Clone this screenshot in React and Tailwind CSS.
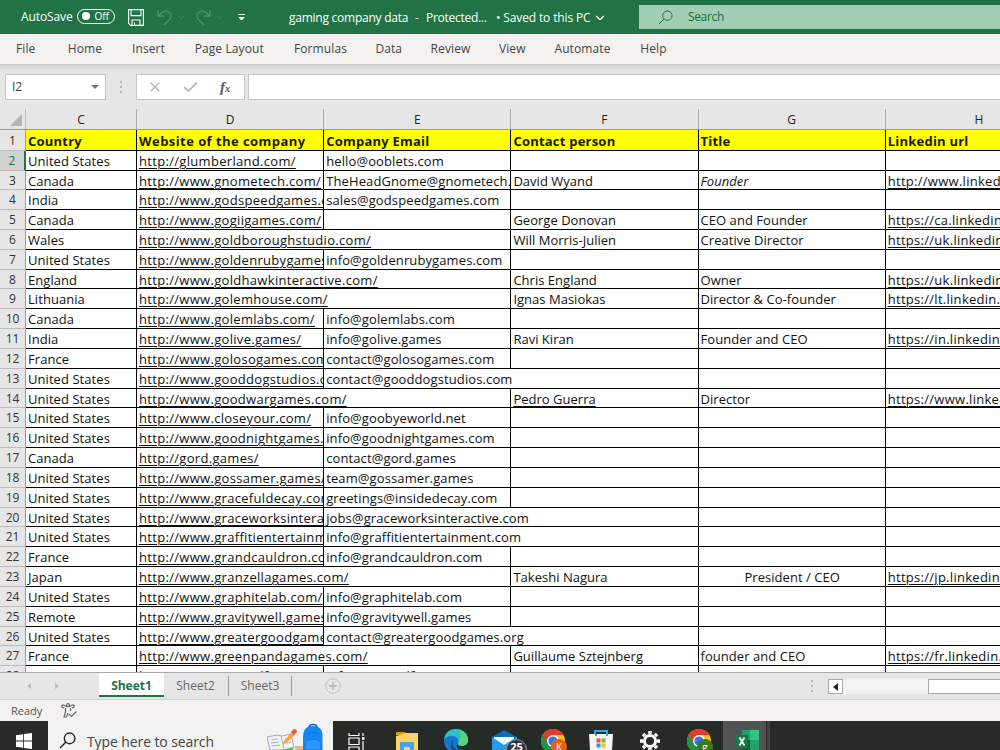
import { ChevronDown, X, Check } from 'lucide-react';

const menus = [
  ['File', 'w-[51.5px]'],
  ['Home', 'w-[67px]'],
  ['Insert', 'w-[60px]'],
  ['Page Layout', 'w-[101.5px]'],
  ['Formulas', 'w-[81px]'],
  ['Data', 'w-[55.5px]'],
  ['Review', 'w-[68px]'],
  ['View', 'w-[55.5px]'],
  ['Automate', 'w-[85px]'],
  ['Help', 'w-[57px]'],
];

const columns = ['C', 'D', 'E', 'F', 'G', 'H'];

const header = ['Country', 'Website of the company', 'Company Email', 'Contact person', 'Title', 'Linkedin url'];

// country, website, email, contact, title, linkedin
const rows = [
  ['United States', 'http://glumberland.com/', 'hello@ooblets.com', '', '', ''],
  ['Canada', 'http://www.gnometech.com/', 'TheHeadGnome@gnometech.com', 'David Wyand', 'Founder', 'http://www.linkedin.com/in/'],
  ['India', 'http://www.godspeedgames.com/', 'sales@godspeedgames.com', '', '', ''],
  ['Canada', 'http://www.gogiigames.com/', '', 'George Donovan', 'CEO and Founder', 'https://ca.linkedin.com/in/'],
  ['Wales', 'http://www.goldboroughstudio.com/', '', 'Will Morris-Julien', 'Creative Director', 'https://uk.linkedin.com/in/'],
  ['United States', 'http://www.goldenrubygames.com/', 'info@goldenrubygames.com', '', '', ''],
  ['England', 'http://www.goldhawkinteractive.com/', '', 'Chris England', 'Owner', 'https://uk.linkedin.com/in/'],
  ['Lithuania', 'http://www.golemhouse.com/', '', 'Ignas Masiokas', 'Director & Co-founder', 'https://lt.linkedin.com/in/'],
  ['Canada', 'http://www.golemlabs.com/', 'info@golemlabs.com', '', '', ''],
  ['India', 'http://www.golive.games/', 'info@golive.games', 'Ravi Kiran', 'Founder and CEO', 'https://in.linkedin.com/in/'],
  ['France', 'http://www.golosogames.com/', 'contact@golosogames.com', '', '', ''],
  ['United States', 'http://www.gooddogstudios.com/', 'contact@gooddogstudios.com', '', '', ''],
  ['United States', 'http://www.goodwargames.com/', '', 'Pedro Guerra', 'Director', 'https://www.linkedin.com/in/'],
  ['United States', 'http://www.closeyour.com/', 'info@goobyeworld.net', '', '', ''],
  ['United States', 'http://www.goodnightgames.com/', 'info@goodnightgames.com', '', '', ''],
  ['Canada', 'http://gord.games/', 'contact@gord.games', '', '', ''],
  ['United States', 'http://www.gossamer.games/', 'team@gossamer.games', '', '', ''],
  ['United States', 'http://www.gracefuldecay.com/', 'greetings@insidedecay.com', '', '', ''],
  ['United States', 'http://www.graceworksinteractive.com/', 'jobs@graceworksinteractive.com', '', '', ''],
  ['United States', 'http://www.graffitientertainment.com/', 'info@graffitientertainment.com', '', '', ''],
  ['France', 'http://www.grandcauldron.com/', 'info@grandcauldron.com', '', '', ''],
  ['Japan', 'http://www.granzellagames.com/', '', 'Takeshi Nagura', 'President / CEO', 'https://jp.linkedin.com/in/'],
  ['United States', 'http://www.graphitelab.com/', 'info@graphitelab.com', '', '', ''],
  ['Remote', 'http://www.gravitywell.games/', 'info@gravitywell.games', '', '', ''],
  ['United States', 'http://www.greatergoodgames.com/', 'contact@greatergoodgames.org', '', '', ''],
  ['France', 'http://www.greenpandagames.com/', '', 'Guillaume Sztejnberg', 'founder and CEO', 'https://fr.linkedin.com/in/'],
  ['Saint Kitts', 'http://www.greywolf.com/', 'info@greywolfgames.com', '', '', ''],
];

// rows whose website / email text runs into the empty cell on its right
const wideWebsite = [6, 8, 9, 14, 23, 27];
const wideEmail = [13, 20, 21, 26];

const tracking = [
  'tracking-[0.06px]',
  'tracking-[0.31px]',
  'tracking-[0.11px]',
  'tracking-[0.02px]',
  'tracking-[0.04px]',
  'tracking-[0.28px]',
];

const Cell = ({ text, col, row }) => {
  const spills = (col === 1 && wideWebsite.includes(row)) || (col === 2 && wideEmail.includes(row));
  const linked = col === 1 || col === 5 || text === 'Pedro Guerra';
  return (
    <div
      className={`${col === 0 ? 'w-[111px]' : 'w-[187.2px]'} shrink-0 border-b border-black pl-[2px] whitespace-nowrap ${tracking[col]} ${
        spills ? 'relative z-10 overflow-visible' : 'overflow-hidden border-r'
      } ${text === 'Founder' ? 'italic' : ''} ${text === 'President / CEO' ? 'pr-px text-center' : ''}`}
    >
      <span className={linked ? 'underline decoration-1 underline-offset-2' : ''}>{text}</span>
    </div>
  );
};

const SearchIcon = ({ className }) => (
  <svg className={className} viewBox="0 0 16 16" fill="none" stroke="currentColor">
    <circle cx="10" cy="6" r="5" />
    <path d="M6.500 9.500L1 15" />
  </svg>
);

const TitleBar = () => (
  <div className="flex h-[34px] shrink-0 items-center bg-[#217346] text-[12px] text-white">
    <span className="ml-[21px] w-[56px] tracking-[-0.1px]">AutoSave</span>
    <div className="flex h-[15px] w-[38px] -translate-y-px items-center justify-between rounded-full border border-white pr-[5px] pl-[4px] text-[10px]">
      <span className="h-[8px] w-[8px] rounded-full bg-white" />
      <span>Off</span>
    </div>
    <svg className="ml-[13px] h-[17px] w-[16px]" viewBox="0 0 16 17" fill="none" stroke="white" strokeWidth="1.1">
      <path d="M.6.6h14.800v15.800H2.600l-2-2zM3 .6v6h10v-6M4 16.400V11h8v5.400M6.500 16v-2.500" />
    </svg>
    <svg className="ml-[13px] h-[17px] w-[16px] text-[#4c946c]" viewBox="0 0 16 17" fill="none" stroke="currentColor" strokeWidth="1.3">
      <path d="M1 1v6h6M1 7l4-3.500c7-4 12 3 7 7.500l-5 5" />
    </svg>
    <ChevronDown className="ml-[4px] h-[9px] w-[9px] text-[#4c946c]" />
    <svg className="ml-[9px] h-[17px] w-[16px] text-[#4c946c]" viewBox="0 0 16 17" fill="none" stroke="currentColor" strokeWidth="1.3">
      <path d="M15 1v6H9M15 7l-4-3.500C4-.5-1 6.500 4 11l5 5" />
    </svg>
    <ChevronDown className="ml-[4px] h-[9px] w-[9px] text-[#4c946c]" />
    <svg className="ml-[13px] h-[9px] w-[9px]" viewBox="0 0 9 9">
      <path d="M1 1.500h7M2 4.500l2.500 2.500L7 4.500z" fill="white" stroke="white" strokeWidth="1" />
    </svg>
    <div className="ml-[43px] flex w-[350px] items-center pt-[2px] whitespace-pre">
      <span className="w-[207px] tracking-[-0.27px]">
        <span className="tracking-[-0.25px]">gaming company data</span>
        <span className="tracking-[0.3px]">{'  -  '}</span>Protected...
      </span>
      <span className="w-[97px] tracking-[-0.14px]">• Saved to this PC</span>
      <ChevronDown className="h-[14px] w-[14px]" />
    </div>
    <div className="flex h-[24px] flex-1 items-center bg-[#a0cfb5] text-[#1e6b40]">
      <SearchIcon className="ml-[19px] h-[15px] w-[15px]" />
      <span className="ml-[15px] tracking-[-0.35px]">Search</span>
    </div>
  </div>
);

const FormulaBar = () => (
  <div className="flex h-[45px] shrink-0 items-center border-t border-[#cccccc] bg-[#e6e6e6] bg-linear-to-b from-[#d5d5d5] to-[#e6e6e6] to-15% pl-[5px]">
    <div className="flex h-[26px] w-[101px] shrink-0 items-center justify-between border border-[#c6c6c6] bg-white pr-[6px] pl-[6px] text-[12px] text-[#444]">
      I2
      <span className="border-x-[4px] border-t-[4px] border-x-transparent border-t-[#777]" />
    </div>
    <Dots className="ml-[14px]" />
    <div className="ml-[14px] flex h-[26px] w-[109px] shrink-0 items-center border border-[#c6c6c6] bg-white">
      <X className="ml-[10px] h-[16px] w-[16px] text-[#b8b8b8]" />
      <Check className="ml-[19px] h-[17px] w-[17px] text-[#b8b8b8]" strokeWidth={2.5} />
      <span className="ml-[21px] font-['Liberation_Serif',serif] text-[15px] font-bold text-[#555] italic">
        f<span className="text-[10px]">x</span>
      </span>
    </div>
    <div className="ml-[3px] h-[26px] flex-1 border border-r-0 border-[#c6c6c6] bg-white" />
  </div>
);

const Dots = ({ className }) => (
  <div className={`flex w-[2px] shrink-0 flex-col gap-[3px] ${className}`}>
    <span className="h-[2px] bg-[#b4b4b4]" />
    <span className="h-[2px] bg-[#b4b4b4]" />
    <span className="h-[2px] bg-[#b4b4b4]" />
  </div>
);

const Sheet = () => (
  <div className="h-[563px] shrink-0 overflow-hidden bg-white">
    <div className="flex h-[21px] w-[1200px] border-b border-[#999] bg-[#e6e6e6] text-[12px] text-[#222]">
      <div className="flex w-[26px] items-end justify-end border-r border-[#bbb] pr-[3px] pb-[3px]">
        <span className="border-b-[12px] border-l-[12px] border-b-[#b4b4b4] border-l-transparent" />
      </div>
      {columns.map((name) => (
        <div
          key={name}
          className={`${name === 'C' ? 'w-[111px]' : 'w-[187.2px]'} shrink-0 border-r border-[#aaa] text-center leading-[21px]`}
        >
          {name}
        </div>
      ))}
    </div>
    <div className="w-[1200px] text-[13px] leading-[20px] text-[#111]">
      <div className="flex h-[20.700px] bg-[#ffff00] font-bold text-[#1a1a00]">
        <RowNumber n={1} />
        {header.map((text, i) => (
          <div
            key={text}
            className={`${i === 0 ? 'w-[111px]' : 'w-[187.2px]'} ${
              i === 1 ? 'tracking-[0.44px]' : 'tracking-[0.22px]'
            } shrink-0 border-r border-b border-black pt-px pl-[2px] whitespace-nowrap`}
          >
            {text}
          </div>
        ))}
      </div>
      {rows.map((row, i) => (
        <div key={i} className="flex h-[19.830px]">
          <RowNumber n={i + 2} />
          {row.map((text, col) => (
            <Cell key={col} text={text} col={col} row={i + 2} />
          ))}
        </div>
      ))}
    </div>
  </div>
);

const RowNumber = ({ n }) => (
  <div
    className={`w-[26px] shrink-0 border-r border-b text-center text-[12px] font-normal ${n === 1 ? 'pt-px' : ''} ${
      n === 2
        ? 'border-r-2 border-r-[#217346] border-b-[#bbb] bg-[#d2d2d2] text-[#217346]'
        : 'border-r-[#999] border-b-[#bdbdbd] bg-[#e6e6e6] text-[#333]'
    }`}
  >
    {n}
  </div>
);

const SheetTabs = () => (
  <div className="flex h-[28px] shrink-0 items-start border-t border-b border-t-[#aaa] border-b-[#d0d0d0] bg-[#e6e6e6] text-[12px] text-[#666]">
    <div className="flex h-[25px] w-[99px] items-center">
      <span className="ml-[27px] border-y-[3px] border-r-[4px] border-y-transparent border-r-[#bbb]" />
      <span className="ml-[24px] border-y-[3px] border-l-[4px] border-y-transparent border-l-[#bbb]" />
    </div>
    <div className="h-[24px] w-[65px] border-b-2 border-[#217346] bg-white text-center leading-[25px] font-bold text-[#217346]">
      Sheet1
    </div>
    <div className="mt-[3px] h-[20px] w-[65px] border-r border-[#999] pr-[1px] text-center leading-[19px]">Sheet2</div>
    <div className="mt-[3px] h-[20px] w-[63px] border-r border-[#999] text-center leading-[19px]">Sheet3</div>
    <svg className="mt-[5px] ml-[33px] h-[16px] w-[16px]" viewBox="0 0 16 16" fill="none" stroke="#bdbdbd">
      <circle cx="8" cy="8" r="7.3" />
      <path d="M8 4v8M4 8h8" strokeWidth="2" />
    </svg>
    <Dots className="mt-[7px] ml-[470px]" />
    <div className="mt-[6px] ml-[15px] flex h-[15px] flex-1 bg-[#f3f3f3]">
      <div className="flex w-[15px] items-center justify-center border border-[#aaa] bg-white">
        <span className="border-y-[4px] border-r-[5px] border-y-transparent border-r-[#222]" />
      </div>
      <div className="ml-[85px] flex-1 border border-r-0 border-[#aaa] bg-white" />
    </div>
  </div>
);

const StatusBar = () => (
  <div className="flex h-[21px] shrink-0 items-center bg-[#f3f2f1] pt-[2px] text-[11px] text-[#555]">
    <span className="ml-[11px] w-[50px]">Ready</span>
    <svg className="-mt-[2px] h-[15px] w-[16px]" viewBox="0 0 16 15" fill="none" stroke="#666" strokeWidth="1.2">
      <circle cx="7" cy="2.200" r="1.500" />
      <path d="M3 5C0 5 0 1.500 2.500 2L5.500 3.500h3L11.500 2C14 1.500 14 5 11 5M4.500 5v4l-1.500 5h2.500l1.500-4M9.500 5v3" />
      <path d="M8 11l2.500 2.500 5-5" />
    </svg>
  </div>
);

const Chrome = ({ letter, color }) => (
  <svg className="h-[28px] w-[28px]" viewBox="0 0 28 28">
    <circle cx="12" cy="12" r="12" fill="#fbc116" />
    <path d="M12 12L1.600 6A12 12 0 0 0 12 24z" fill="#229342" />
    <path d="M12 6h10.400a12 12 0 0 0-20.800 0l5 8z" fill="#e33b2e" />
    <circle cx="12" cy="12" r="6" fill="white" />
    <circle cx="12" cy="12" r="4.600" fill="#3578e5" />
    <circle cx="18" cy="18" r="8" fill={color} />
    <text x="18" y="21.500" textAnchor="middle" fontSize="10" fill="white">{letter}</text>
  </svg>
);

const Taskbar = () => (
  <div className="flex h-[29px] shrink-0 items-start overflow-hidden bg-[#262b27]">
    <div className="flex h-full w-[48px] shrink-0 justify-center pt-[12px]">
      <svg className="h-[16px] w-[16px]" viewBox="0 0 16 16" fill="white">
        <path d="M0 2.200L7 1.200V7.600H0zM7.800 1.100L16 0v7.600H7.800zM0 8.400h7v6.400l-7-1zM7.800 8.400H16V16l-8.200-1.100z" />
      </svg>
    </div>
    <div className="flex h-[29px] w-[285px] shrink-0 bg-[#f2f2f2]">
      <SearchIcon className="mt-[11px] ml-[11px] h-[17px] w-[17px] text-[#222] [stroke-width:1.3]" />
      <span className="mt-[10px] ml-[11px] w-[180px] text-[14px] leading-[22px] tracking-[-0.1px] whitespace-nowrap text-[#444]">
        Type here to search
      </span>
      <svg className="h-[29px] w-[60px] shrink-0" viewBox="0 0 60 29">
        <path d="M28 25h8v4h-8z" fill="#dfb98c" />
        <path d="M0 16l10-2 5 1 9-2 3 14-10 2H3z" fill="#eef5f3" stroke="#b39acb" />
        <path d="M3 29h12l11-3v3z" fill="#5dbb63" />
        <path d="M14 15l3 13M4 19l7-1M4 22l8-1M5 25l8-1M18 18l5-1M19 22l5-1" stroke="#a8b8bb" />
        <path d="M15 24l2-4 8-9 3 3-9 8z" fill="#f8a634" />
        <path d="M24 11l3-3q3 0 3 3l-3 3z" fill="#eb5a50" />
        <path d="M36 29V16q0-11 10-11t9.500 11v13z" fill="#1687f5" />
        <path d="M42 6.500q0-3 4-3t4 3" fill="none" stroke="#0b61cc" strokeWidth="1.500" />
        <path d="M38 29v-7q2-4 8-4t8 4v7z" fill="#2b96ff" stroke="#1477e6" />
        <path d="M40 13q6-3 12 0" fill="none" stroke="#0f70e0" />
      </svg>
    </div>
    <svg className="mt-[12px] ml-[15px] h-[17px] w-[17px] shrink-0" viewBox="0 0 17 17" fill="none" stroke="white" strokeWidth="1.2">
      <path d="M1 0v2.500h10V0M1 17v-3h10v3M1 5h10v6.500H1zM15 0v3M15 8v9" />
      <path d="M14 5.500h2.500" strokeWidth="2.500" />
    </svg>
    <svg className="mt-[10px] ml-[31px] h-[20px] w-[22px] shrink-0" viewBox="0 0 22 20">
      <path d="M0 1h9l2 3H0z" fill="#d99a18" />
      <path d="M0 5l10-3h12v18H0z" fill="#fbd365" />
      <path d="M4 20v-9h14v9h-4v-4H8v4z" fill="#4aa3e6" />
    </svg>
    <svg className="mt-[8px] ml-[26px] h-[24px] w-[24px] shrink-0" viewBox="0 0 24 24">
      <circle cx="12" cy="12" r="12" fill="#1478ce" />
      <path d="M0 11C1 3 6 0 12 0c8 0 12 6 12 11 0 4-3 6-6 6s-5-1-4-3c2-5-4-8-8-7-3 .6-5 2-6 4z" fill="#30bfd1" />
      <path d="M15 .5c6 1 9 6 9 10.500 0 4-3 6-6 6-2 0-4-1-4-2 3-4 3-9 1-14.500z" fill="#57d37a" />
      <path d="M10 10c-4 6 1 12 9 11l-5 3C7 23 4 15 10 10z" fill="#114a8b" />
      <path d="M14 14c-1 2 1 3 4 3s4-1 6-3v4l-4 3c-6 0-9-3-6-7z" fill="#262b27" />
    </svg>
    <div className="relative mt-[9px] ml-[24px] h-[20px] w-[34px] shrink-0">
      <svg className="h-[20px] w-[25px]" viewBox="0 0 25 20">
        <path d="M0 7L12 0l13 7v13H0z" fill="#1269b5" />
        <path d="M2 7h20v13H2z" fill="#f5f9fd" />
        <path d="M0 7l12 8L25 7v13H0z" fill="#249cec" />
      </svg>
      <span className="absolute top-[9px] left-[14px] h-[21px] w-[21px] rounded-full border border-[#8e9499] bg-[#30383d] text-center text-[11px] leading-[14px] font-bold text-white">
        25
      </span>
    </div>
    <div className="mt-[8px] ml-[15px] w-[28px] shrink-0">
      <Chrome letter="K" color="#e8620c" />
    </div>
    <svg className="mt-[8px] ml-[20px] h-[21px] w-[24px] shrink-0" viewBox="0 0 24 21">
      <path d="M6 6V2h12v4" fill="none" stroke="#30a9e8" strokeWidth="2" />
      <path d="M0 5h24l-1 16H1z" fill="#f5f5f5" />
      <path d="M6 5h2v2H6zM17 5h2v2h-2z" fill="#30a9e8" />
      <path d="M7.500 9.500h4v4h-4z" fill="#ee5425" />
      <path d="M12.500 9.500h4v4h-4z" fill="#7db62b" />
      <path d="M7.500 14.500h4v4h-4z" fill="#189fe0" />
      <path d="M12.500 14.500h4v4h-4z" fill="#f9b718" />
    </svg>
    <svg className="mt-[10px] ml-[27px] h-[20px] w-[20px] shrink-0" viewBox="0 0 20 20" fill="none" stroke="white">
      <circle cx="10" cy="10" r="5.500" strokeWidth="3" />
      <path d="M10 0v3M10 17v3M0 10h3M17 10h3M3 3l2 2M15 15l2 2M17 3l-2 2M3 17l2-2" strokeWidth="3.500" />
    </svg>
    <div className="mt-[8px] ml-[27px] w-[28px] shrink-0">
      <Chrome letter="g" color="#3c7a22" />
    </div>
    <div className="ml-[8px] h-full w-[43px] shrink-0 bg-[#505452] pt-[9px] pl-[13px]">
      <svg className="h-[20px] w-[23px]" viewBox="0 0 23 20">
        <path d="M6 0h8v10H6z" fill="#21a366" />
        <path d="M14 0h9v10h-9z" fill="#33c481" />
        <path d="M6 10h8v10H6z" fill="#185c37" />
        <path d="M14 10h9v10h-9z" fill="#21a366" />
        <path d="M0 5h12v13H0z" fill="#107c41" />
        <path d="M3.500 7.500l5 8M8.500 7.500l-5 8" stroke="white" strokeWidth="1.800" />
      </svg>
    </div>
    <div className="ml-px h-full w-[3px] bg-[#414542]" />
  </div>
);

const App = () => {
  return (
    <div className="flex h-[750px] w-[1000px] flex-col overflow-hidden bg-[#e6e6e6] font-['Open_Sans','Noto_Sans',sans-serif]">
      <TitleBar />
      <div className="flex h-[30px] shrink-0 items-center bg-[#f3f2f1] text-[12px] text-[#444]">
        {menus.map(([name, width]) => (
          <span key={name} className={`${width} text-center tracking-[0.1px] whitespace-nowrap`}>{name}</span>
        ))}
      </div>
      <FormulaBar />
      <Sheet />
      <SheetTabs />
      <StatusBar />
      <Taskbar />
    </div>
  );
};

export default App;
